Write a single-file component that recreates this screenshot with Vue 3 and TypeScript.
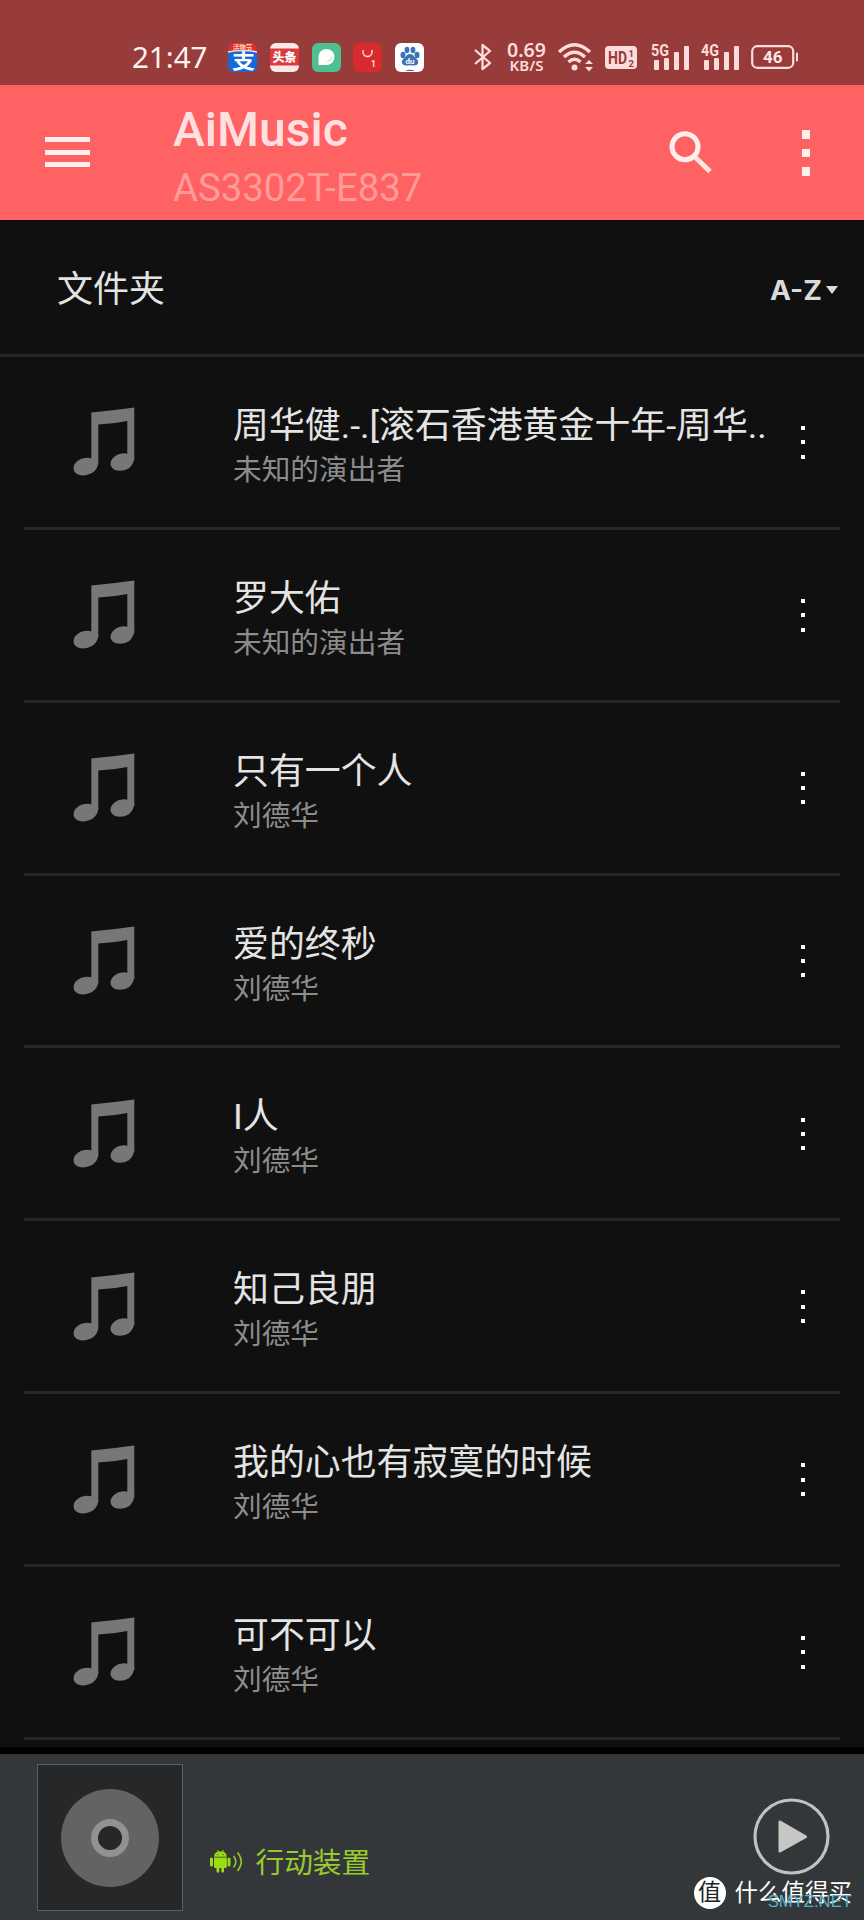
<script setup lang="ts">
interface Track {
  title: string
  artist: string
}

const tracks: Track[] = [
  { title: '周华健.-.[滚石香港黄金十年-周华..', artist: '未知的演出者' },
  { title: '罗大佑', artist: '未知的演出者' },
  { title: '只有一个人', artist: '刘德华' },
  { title: '爱的终秒', artist: '刘德华' },
  { title: 'I人', artist: '刘德华' },
  { title: '知己良朋', artist: '刘德华' },
  { title: '我的心也有寂寞的时候', artist: '刘德华' },
  { title: '可不可以', artist: '刘德华' },
]

const networks: string[] = ['5G', '4G']
</script>

<template>
  <div class="screen">
    <header class="status">
      <span class="clock">21:47</span>
      <div class="apps">
        <svg class="app" viewBox="0 0 29 29">
          <rect width="29" height="29" rx="6" fill="#1769d8" />
          <path d="M0 9V6Q0 0 6 0H23Q29 0 29 6V9Q15 6 0 9Z" fill="#d92e2d" />
          <path d="M0 9Q15 6 29 9" fill="none" stroke="#f4d9df" stroke-width="1.4" />
          <text x="14.5" y="7" font-size="6.5" font-weight="700" fill="#ffd9b5" text-anchor="middle">活物节</text>
          <text x="4" y="25.500" font-size="20" font-weight="700" textLength="23" lengthAdjust="spacingAndGlyphs" fill="#fff">支</text>
        </svg>
        <svg class="app" viewBox="0 0 29 29">
          <rect width="29" height="29" rx="6" fill="#fbe9e7" />
          <rect y="5.500" width="29" height="17" fill="#da3b3c" />
          <text x="14.500" y="19" font-size="12" font-weight="900" fill="#fff" text-anchor="middle">头条</text>
        </svg>
        <svg class="app" viewBox="0 0 29 29">
          <rect width="29" height="29" rx="6" fill="#4fbe91" />
          <path d="M6.500 22V14A8 8 0 1 1 14.500 22Z" fill="#fff" />
          <path d="M15 18.500Q19 18 20 14" fill="none" stroke="#a9dfc9" stroke-width="1" />
        </svg>
        <svg class="app" viewBox="0 0 29 29">
          <rect width="29" height="29" rx="6" fill="#d92b2e" />
          <path d="M10 7V9A4.500 4.500 0 0 0 19 9V7" fill="none" stroke="#fbd5d2" stroke-width="1.500" />
          <text x="20.500" y="24" font-size="8.500" font-weight="700" fill="#fbe3df" text-anchor="middle">1</text>
        </svg>
        <svg class="app" viewBox="0 0 29 29">
          <rect width="29" height="29" rx="6" fill="#fff" />
          <g fill="#3b73b9">
            <ellipse cx="8" cy="12" rx="2.500" ry="3.200" />
            <ellipse cx="12" cy="7" rx="2.400" ry="3.200" />
            <ellipse cx="18" cy="7" rx="2.400" ry="3.200" />
            <ellipse cx="22" cy="12" rx="2.500" ry="3.200" />
            <path d="M15 11Q18 11 19.500 14Q24 17 23 20.500Q22 23 18 22.500Q15 22 12 22.500Q8 23 7 20Q6 17 10.500 14Q12 11 15 11Z" />
          </g>
          <text x="15" y="20.500" font-size="8" font-weight="700" fill="#fff" text-anchor="middle">du</text>
          <path d="M10 28Q15 25.500 20 28Z" fill="#7d5a70" />
        </svg>
      </div>

      <div class="signals">
        <svg class="bluetooth" viewBox="0 0 18 30">
          <path d="M1 8L16 21L8.500 27V3L16 9L1 22" fill="none" stroke="#ffdcdc" stroke-width="2.300" stroke-linejoin="round" />
        </svg>
        <div class="speed">
          <span class="rate">0.69</span>
          <span class="unit">KB/S</span>
        </div>
        <svg class="wifi" viewBox="0 0 36 29">
          <g fill="none" stroke="#ffdcdc" stroke-width="3.400">
            <path d="M1 9Q16.500 -5.500 32 9" />
            <path d="M6 14Q16.500 4.500 27 14" />
            <path d="M10.500 19Q16.500 13.500 22.500 19" />
          </g>
          <circle cx="16.500" cy="24.500" r="3" fill="#ffdcdc" />
          <path d="M27 21L31 17L35 21ZM27 24H35L31 28.500Z" fill="#ffdcdc" />
        </svg>
        <svg class="hd" viewBox="0 0 32 23">
          <rect width="32" height="23" rx="4" fill="#ffdcdc" />
          <text x="3" y="18" font-size="18" font-weight="700" textLength="19" lengthAdjust="spacingAndGlyphs" fill="#983b3b">HD</text>
          <text x="23.500" y="10.500" font-size="9.500" font-weight="700" fill="#983b3b">1</text>
          <text x="23.500" y="21" font-size="9.500" font-weight="700" fill="#983b3b">2</text>
        </svg>
        <svg v-for="name in networks" :key="name" class="cell" viewBox="0 0 38 28">
          <text x="0" y="13" font-size="16.500" font-weight="700" textLength="18" lengthAdjust="spacingAndGlyphs" fill="#ffdcdc">{{ name }}</text>
          <g fill="#ffdcdc">
            <rect x="3" y="17" width="5" height="10" rx="1" />
            <rect x="13" y="15" width="5" height="12" rx="1" />
            <rect x="23" y="9" width="5" height="18" rx="1" />
            <rect x="33" y="3" width="5" height="24" rx="1" />
          </g>
        </svg>
        <svg class="battery" viewBox="0 0 48 24">
          <rect x="1.200" y="1.200" width="41" height="21.600" rx="5" fill="none" stroke="#ffdcdc" stroke-width="2.200" />
          <rect x="45" y="7.500" width="2" height="9" rx="1" fill="#ffdcdc" />
          <text x="21.700" y="18" font-size="17" font-weight="700" fill="#ffe6e6" text-anchor="middle">46</text>
        </svg>
      </div>
    </header>

    <nav class="appbar">
      <button class="menu" aria-label="menu"><i></i><i></i><i></i></button>
      <div class="heading">
        <h1>AiMusic</h1>
        <p>AS3302T-E837</p>
      </div>
      <svg class="search" viewBox="0 0 44 44">
        <circle cx="17" cy="16.700" r="13" fill="none" stroke="#ffeeed" stroke-width="5" />
        <path d="M27.500 27.500L42 41.500" stroke="#ffe6df" stroke-width="5" />
      </svg>
      <div class="dots large"><i></i><i></i><i></i></div>
    </nav>

    <section class="toolbar">
      <h2>文件夹</h2>
      <div class="sort">
        <svg class="order" viewBox="0 0 52 20">
          <text x="0" y="19.500" font-size="26.500" font-weight="700" textLength="52" lengthAdjust="spacingAndGlyphs" fill="#dadada">A-Z</text>
        </svg>
        <i class="caret"></i>
      </div>
    </section>

    <main class="list">
      <article v-for="(track, index) in tracks" :key="index" class="row">
        <svg class="note" viewBox="0 0 62 69">
          <g fill="#777">
            <path d="M18.300 5.500Q40 3.500 61.300 0.500V53H54.300V14Q40 17 25.300 17.500V57H18.300Z" />
            <path d="M25.300 55Q25.300 62 19 66Q12 70 5 67.500Q-1 64.500 1 58.500Q4 52 12 51Q16 50.500 18.500 51.500Z" />
            <path d="M61.300 50Q61.300 57 55.500 61.500Q49 65 42 63Q36 60 38 54Q41 47.500 49 46.500Q52 46 55 47Z" />
          </g>
        </svg>
        <div class="info">
          <div class="title">{{ track.title }}</div>
          <div class="artist">{{ track.artist }}</div>
        </div>
        <div class="dots"><i></i><i></i><i></i></div>
      </article>
    </main>

    <footer class="player">
      <div class="cover">
        <div class="disc"><div class="hub"></div></div>
      </div>
      <div class="device">
        <svg class="android" viewBox="0 0 34 24">
          <g fill="#9bdc13">
            <rect x="0" y="7.500" width="3" height="9" rx="1.500" />
            <rect x="17.500" y="7.500" width="3" height="9" rx="1.500" />
            <path d="M4 6.800Q4.500 2.500 8 1.800L7 0H8L9 1.500H12L13 0H14L13 1.800Q16.300 2.500 16.800 6.800ZM4 7.600H16.800V16.500Q16.800 18 15.300 18H14V21.500Q12.500 24 11.300 21.500V18H9.300V21.500Q8 24 6.500 21.500V18H5.500Q4 18 4 16.500Z" />
          </g>
          <g fill="#34373a"><circle cx="7.800" cy="4.600" r=".6" /><circle cx="13" cy="4.600" r=".6" /></g>
          <path d="M23.500 6Q28 11.500 23.500 17.500M27.500 2.500Q35 11.500 27.500 21" fill="none" stroke="#8fc727" stroke-width="1.600" />
        </svg>
        <span>行动装置</span>
      </div>
      <svg class="play" viewBox="0 0 77 77">
        <circle cx="38.500" cy="38.500" r="36.500" fill="none" stroke="#bfc1c2" stroke-width="3.200" />
        <path d="M27 24V53L52.500 38.700Z" fill="#c6c7c5" stroke="#c6c7c5" stroke-width="3" stroke-linejoin="round" />
      </svg>
      <div class="watermark">
        <span class="seal">值</span>
        <span class="brand">什么值得买</span>
        <span class="site">SMYZ.NET</span>
      </div>
    </footer>
  </div>
</template>

<style>
body {
  margin: 0;
  background: #101010;
}
</style>

<style scoped>
.screen {
  width: 864px;
  height: 1920px;
  display: flex;
  flex-direction: column;
  overflow: hidden;
  background: #101010;
  color: #e4e4e4;
  font-family: Roboto, "Noto Sans CJK SC", sans-serif;
}
svg { display: block; flex: none; overflow: visible; }
h1, h2, p { margin: 0; }

.status {
  box-sizing: border-box;
  height: 85px;
  flex: none;
  display: flex;
  align-items: center;
  padding: 29px 65px 0 132px;
  background: #983b3b;
}
.clock {
  width: 97px;
  font: 400 29.500px/30px "Noto Sans", sans-serif;
  color: #fff2f2;
  white-space: nowrap;
}
.apps { display: flex; gap: 12.700px; }
.app { width: 29px; height: 29px; }
.signals { flex: 1; display: flex; align-items: center; margin-left: 49.500px; }
.bluetooth { width: 18px; height: 30px; }
.speed {
  width: 40px;
  margin-left: 15px;
  display: flex;
  flex-direction: column;
  align-items: center;
  color: #ffdcdc;
  font-family: "Noto Sans", sans-serif;
  font-weight: 600;
}
.rate { font-size: 19.500px; line-height: 16px; }
.unit { font-size: 15px; line-height: 14px; }
.wifi { width: 36px; height: 29px; margin-left: 11.500px; }
.hd { width: 32px; height: 23px; margin-left: 11px; margin-right: 2px; }
.cell { width: 38px; height: 28px; margin-left: 12px; }
.battery { width: 48px; height: 24px; margin-left: 12px; }

.appbar {
  box-sizing: border-box;
  height: 135px;
  flex: none;
  display: flex;
  align-items: flex-start;
  padding: 0 54px 0 45px;
  background: #ff6262;
}
.menu {
  width: 45px;
  margin: 52px 0 0;
  padding: 0;
  border: 0;
  background: none;
  display: flex;
  flex-direction: column;
  gap: 7.500px;
}
.menu i { height: 5px; background: #fff0f0; }
.heading { width: 494px; margin: 17px 0 0 83px; }
.heading h1 {
  font-size: 48px;
  line-height: 56px;
  font-weight: 500;
  color: #ffdfe0;
}
.heading p {
  font-size: 38.300px;
  line-height: 46px;
  margin-top: 7px;
  font-weight: 400;
  color: #ff9c9a;
  white-space: nowrap;
}
.search { width: 44px; height: 44px; margin: 45px 0 0 1px; }

.dots { display: flex; flex-direction: column; gap: 10.300px; flex: none; }
.dots i { width: 4px; height: 4px; background: #fff; }
.dots.large { gap: 10px; margin: 45px 0 0 auto; }
.dots.large i { width: 8.500px; height: 8.500px; background: #fff0ef; }
.row .dots { padding-top: 1px; }

.toolbar {
  box-sizing: border-box;
  height: 137px;
  flex: none;
  display: flex;
  align-items: center;
  justify-content: space-between;
  padding: 6px 26px 0 57px;
  border-bottom: 3px solid #282828;
}
.toolbar h2 { font-size: 36px; line-height: 44px; font-weight: 400; }
.sort {
  display: flex;
  align-items: center;
  gap: 4px;
  font-family: Inter, sans-serif;
}
.order { width: 52px; height: 20px; }
.caret {
  border: 6px solid transparent;
  border-top: 8px solid #dadada;
  border-bottom: 0;
}

.list {
  height: 1390px;
  flex: none;
  overflow: hidden;
}
.row {
  box-sizing: border-box;
  height: 172.860px;
  margin: 0 24px;
  padding: 0 35px 0 49px;
  display: flex;
  align-items: center;
  border-bottom: 3px solid #282828;
}
.note { width: 62px; height: 69px; }
.info { flex: 1; margin-left: 98px; padding-top: 12px; white-space: nowrap; }
.title { font-size: 35.900px; line-height: 44px; }
.artist { font-size: 28.700px; line-height: 44px; color: #8c8c8c; }

.player {
  position: relative;
  box-sizing: border-box;
  height: 173px;
  flex: none;
  display: flex;
  align-items: flex-start;
  border-top: 7px solid #000;
  background: #34373a;
}
.cover {
  box-sizing: border-box;
  width: 146px;
  height: 147px;
  margin: 10px 0 0 37px;
  border: 1px solid #5d6062;
  background: #262729;
  display: grid;
  place-items: center;
}
.disc {
  width: 98px;
  height: 98px;
  border-radius: 50%;
  background: #636363;
  display: grid;
  place-items: center;
}
.hub {
  box-sizing: border-box;
  width: 38px;
  height: 38px;
  border: 7px solid #929292;
  border-radius: 50%;
  background: #262729;
}
.device {
  display: flex;
  align-items: center;
  gap: 12px;
  margin: 91px 0 0 26.500px;
  color: #98cb2c;
  font-size: 28.700px;
  line-height: 36px;
}
.android { width: 34px; height: 24px; margin-top: -2px; }
.play { width: 77px; height: 77px; margin: 44px 34px 0 auto; }
.watermark {
  position: absolute;
  right: 12px;
  bottom: 11px;
  display: flex;
  align-items: center;
  gap: 9px;
  color: #fff;
}
.seal {
  width: 32px;
  height: 32px;
  border-radius: 50%;
  background: #fff;
  color: #202224;
  font-size: 23px;
  line-height: 31px;
  text-align: center;
}
.brand { font-size: 23.500px; line-height: 30px; }
.site {
  position: absolute;
  right: 0;
  bottom: -4px;
  font: 400 16.700px/22px "Liberation Sans", sans-serif;
  color: #56b2c3;
}
</style>
